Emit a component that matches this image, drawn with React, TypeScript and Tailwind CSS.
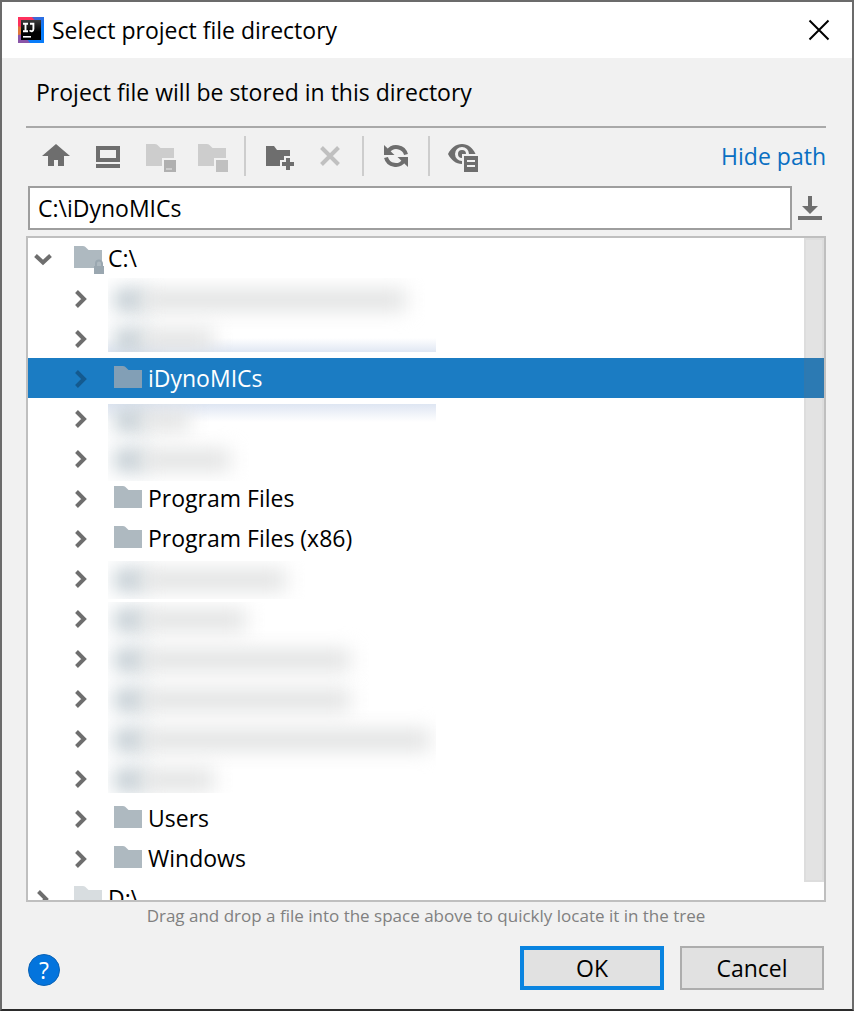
import React, { useState } from "react";

type Tone = "normal" | "selected" | "faded";

type TreeNode = {
  id: string;
  level: 0 | 1;
  label?: string;
  expanded?: boolean;
  locked?: boolean;
  faded?: boolean;
  hidden?: { bar: string; clip: string; tint?: string };
};

const CLIP_MID = "[clip-path:inset(-30px_0_-30px_0)]";

const nodes: TreeNode[] = [
  { id: "c", level: 0, label: "C:\\", expanded: true, locked: true },
  { id: "h1", level: 1, hidden: { bar: "w-64", clip: "[clip-path:inset(0_0_-30px_0)]" } },
  {
    id: "h2",
    level: 1,
    hidden: {
      bar: "w-16",
      clip: "[clip-path:inset(-30px_0_6px_0)]",
      tint: "bg-linear-to-b from-transparent from-50% to-[#d3ddee]",
    },
  },
  { id: "idyno", level: 1, label: "iDynoMICs" },
  {
    id: "h3",
    level: 1,
    hidden: {
      bar: "w-10",
      clip: "[clip-path:inset(6px_0_-30px_0)]",
      tint: "bg-linear-to-t from-transparent from-40% to-[#d3ddee]",
    },
  },
  { id: "h4", level: 1, hidden: { bar: "w-20", clip: "[clip-path:inset(-30px_0_-3px_0)]" } },
  { id: "pf", level: 1, label: "Program Files" },
  { id: "pf86", level: 1, label: "Program Files (x86)" },
  { id: "h5", level: 1, hidden: { bar: "w-34", clip: "[clip-path:inset(3px_0_-1px_0)]" } },
  { id: "h6", level: 1, hidden: { bar: "w-24", clip: "[clip-path:inset(4px_0_-30px_0)]" } },
  { id: "h7", level: 1, hidden: { bar: "w-50", clip: CLIP_MID } },
  { id: "h8", level: 1, hidden: { bar: "w-50", clip: CLIP_MID } },
  { id: "h9", level: 1, hidden: { bar: "w-70", clip: CLIP_MID } },
  { id: "h10", level: 1, hidden: { bar: "w-16", clip: "[clip-path:inset(-30px_0_5px_0)]" } },
  { id: "users", level: 1, label: "Users" },
  { id: "windows", level: 1, label: "Windows" },
  { id: "d", level: 0, label: "D:\\", faded: true },
];

function AppLogo() {
  return (
    <svg className="size-[26px] shrink-0" viewBox="0 0 26 26" aria-hidden="true">
      <defs>
        <linearGradient id="edge" x1="0" y1="0" x2="1" y2="1">
          <stop offset="0.3" stopColor="#4a63cf" />
          <stop offset="0.7" stopColor="#087cfa" />
        </linearGradient>
        <linearGradient id="face" x1="0" y1="0" x2="0" y2="1">
          <stop offset="0" stopColor="#3a3a3a" />
          <stop offset="0.6" stopColor="#000" />
        </linearGradient>
      </defs>
      <rect width="26" height="26" fill="url(#edge)" />
      <path d="M0 0H14L19 6L8 16L0 12Z" fill="#fe315d" />
      <path d="M0 9L5 11V20L0 19Z" fill="#e0783a" />
      <path d="M0 18L5 17L12 26H0Z" fill="#8a55a8" />
      <rect x="3" y="3" width="20" height="20" fill="url(#face)" />
      <path
        d="M5 6.8H10M7.5 6.8V14.2M5 14.2H10M12 6.8H15.4V12C15.4 14.8 13 14.6 11.6 13.4"
        fill="none"
        stroke="#fff"
        strokeWidth="1.9"
      />
      <rect x="5" y="19" width="8" height="1.6" fill="#fff" />
    </svg>
  );
}

function ToolIcon({ children }: { children: React.ReactNode }) {
  return (
    <svg className="size-8" viewBox="0 0 32 32" fill="#6e6e6e" aria-hidden="true">
      {children}
    </svg>
  );
}

function ToolButton({
  label,
  disabled,
  children,
}: {
  label: string;
  disabled?: boolean;
  children: React.ReactNode;
}) {
  return (
    <button type="button" aria-label={label} disabled={disabled} className="shrink-0">
      <ToolIcon>{children}</ToolIcon>
    </button>
  );
}

function Separator() {
  return <span className="mx-4 h-10 w-0.5 shrink-0 bg-[#cdcdcd]" />;
}

function Folder({ tone, locked }: { tone: Tone; locked?: boolean }) {
  const fill = tone === "selected" ? "#829fb6" : tone === "faded" ? "#d8dde0" : "#aeb9c0";
  return (
    <svg className="h-10 w-[30px] shrink-0" viewBox="0 0 30 40" aria-hidden="true">
      <path d="M0 8H9Q11 8 12.500 10L14.500 12H28V30H0Z" fill={fill} />
      {locked && (
        <g>
          <path d="M22 28V25.500A3 3 0 0 1 28 25.500V28" fill="none" stroke="#9aa7b0" strokeWidth="2" />
          <rect x="20" y="28" width="10" height="8" fill="#9aa7b0" />
        </g>
      )}
    </svg>
  );
}

function Chevron({ open, selected }: { open?: boolean; selected?: boolean }) {
  return (
    <svg className="h-10 w-5 shrink-0" viewBox="0 0 20 40" aria-hidden="true">
      <path
        d={open ? "M1.500 17.500L9 24.500L16.500 17.500" : "M4.500 13.500L12 21L4.500 28.500"}
        fill="none"
        stroke={selected ? "#145a8f" : "#6e6e6e"}
        strokeWidth="4"
      />
    </svg>
  );
}

function HiddenEntry({ bar, clip, tint }: { bar: string; clip: string; tint?: string }) {
  return (
    <span className={`-ml-1.5 flex h-10 w-[328px] items-center pt-1 pl-1.5 ${tint ?? ""} ${clip}`}>
      <span className="h-6 w-8 shrink-0 bg-[#c6d0d6] blur-[9px]" />
      <span className={`-ml-1 h-5 shrink-0 bg-[#dfe0e0] blur-[10px] ${bar} box-content pr-2`} />
    </span>
  );
}

export default function App() {
  const [selected, setSelected] = useState("idyno");
  const [path, setPath] = useState("C:\\iDynoMICs");

  return (
    <div className="flex h-screen min-w-[640px] flex-col border-2 border-[#6b6b6b] border-b-[#2b2b2b] bg-[#f1f1f1] font-['Open_Sans','Noto_Sans',sans-serif] text-[23px] leading-8 text-black">
      <header className="flex h-14 shrink-0 items-center gap-2 bg-white pr-5 pl-4">
        <AppLogo />
        <h1 className="flex-1">Select project file directory</h1>
        <button type="button" aria-label="Close">
          <svg className="size-[26px]" viewBox="0 0 26 26" aria-hidden="true">
            <path d="M3.500 3.500L22.500 22.500M22.500 3.500L3.500 22.500" stroke="#000" strokeWidth="2" />
          </svg>
        </button>
      </header>

      <main className="flex min-h-0 flex-1 flex-col pr-[26px] pl-6">
        <p className="flex h-[70px] shrink-0 items-center border-b-2 border-[#a9a9a9] px-2.5">
          Project file will be stored in this directory
        </p>

        <div className="flex h-[58px] shrink-0 items-center pb-0.5 pl-3.5">
          <div className="flex gap-5">
            <ToolButton label="Home">
              <path d="M16 4L30 16H24V26H18V20H14V26H8V16H2Z" />
            </ToolButton>
            <ToolButton label="Desktop">
              <path fillRule="evenodd" d="M4 6H28V22H4ZM8 10V18H24V10Z" />
              <path d="M4 24H28V28H4Z" />
            </ToolButton>
            <ToolButton label="Project directory" disabled>
              <path d="M2 4H11Q13 4 14.500 6L16.500 8H30V18H18V26H2Z" fill="#cdcdcd" />
              <path d="M20 20H32V32H20Z" fill="#b0b0b0" />
              <path d="M22 28H28V30H22Z" fill="#cdcdcd" />
            </ToolButton>
            <ToolButton label="Module directory" disabled>
              <path d="M2 4H11Q13 4 14.500 6L16.500 8H30V18H18V26H2Z" fill="#cdcdcd" />
              <path d="M20 20H32V32H20Z" fill="#c0c0c0" />
            </ToolButton>
          </div>
          <Separator />
          <div className="flex gap-5">
            <ToolButton label="New folder">
              <path d="M4 6H12L15 10H28V16H22V20H18V26H4Z" />
              <path d="M24 18H28V22H32V26H28V30H24V26H20V22H24Z" />
            </ToolButton>
            <ToolButton label="Delete" disabled>
              <path d="M7.500 7.500L24.500 24.500M24.500 7.500L7.500 24.500" stroke="#c0c0c0" strokeWidth="4" />
            </ToolButton>
          </div>
          <Separator />
          <ToolButton label="Refresh">
            <g fill="none" stroke="#6e6e6e" strokeWidth="4">
              <path d="M8 11.500A10 10 0 0 1 26 14.500" />
              <path d="M24 20.500A10 10 0 0 1 6 17.500" />
            </g>
            <path d="M4 5V15H14.500Z" />
            <path d="M28 27V17H17.500Z" />
          </ToolButton>
          <Separator />
          <ToolButton label="Show hidden files">
            <path
              fillRule="evenodd"
              d="M2 14C5 8 10 4 16 4C22 4 27 8 29.500 14H16V24C10 24 5 20 2 14ZM16 7A7 7 0 1 0 16 21V14H23A7 7 0 0 0 16 7Z"
            />
            <path d="M16 10A4 4 0 1 0 16 18V14H20A4 4 0 0 0 16 10Z" />
            <path fillRule="evenodd" d="M18 16H32V32H18ZM21 20V22H29V20ZM21 25V27H29V25Z" />
          </ToolButton>
          <a href="#path" className="ml-auto text-[#0a6fc2]">
            Hide path
          </a>
        </div>

        <div className="flex shrink-0 items-center gap-1.5 pl-0.5">
          <input
            id="path"
            aria-label="Path"
            value={path}
            onChange={(e) => setPath(e.target.value)}
            className="h-11 min-w-0 flex-1 border-2 border-[#9e9e9e] bg-white px-2 outline-none"
          />
          <button type="button" aria-label="Recent paths" className="mr-1">
            <svg className="size-6" viewBox="0 0 24 24" fill="#6e6e6e" aria-hidden="true">
              <path d="M10 0H14V10H20L12 18L4 10H10Z" />
              <path d="M0 20H24V24H0Z" />
            </svg>
          </button>
        </div>

        <div className="relative mt-1.5 flex min-h-0 flex-1 border-2 border-[#bfbfbf] bg-white">
          <ul role="tree" aria-label="Directories" className="flex-1 overflow-y-auto [scrollbar-width:none]">
            {nodes.map((node) => {
              const isSelected = node.id === selected;
              return (
                <li
                  key={node.id}
                  role="treeitem"
                  aria-selected={isSelected}
                  aria-expanded={!!node.expanded}
                  onClick={() => setSelected(node.id)}
                  className={`flex h-10 items-center ${node.level ? "pl-11" : "pl-1.5"} ${
                    isSelected ? "bg-[#1b7cc3] text-white" : ""
                  }`}
                >
                  <Chevron open={node.expanded} selected={isSelected} />
                  <span className={`flex items-center gap-1 ${node.level ? "ml-[22px]" : "ml-5"}`}>
                    {node.hidden ? (
                      <HiddenEntry {...node.hidden} />
                    ) : (
                      <>
                        <Folder
                          tone={isSelected ? "selected" : node.faded ? "faded" : "normal"}
                          locked={node.locked}
                        />
                        <span>{node.label}</span>
                      </>
                    )}
                  </span>
                </li>
              );
            })}
          </ul>
          <div className="absolute top-0 right-0 bottom-[18px] w-5 border-2 border-[#737373]/5 bg-[#737373]/20" />
        </div>

        <p className="shrink-0 text-center text-[17px] leading-7 text-[#808080]">
          Drag and drop a file into the space above to quickly locate it in the tree
        </p>

        <footer className="mt-4 mb-[19px] flex h-11 shrink-0 items-center gap-4 px-0.5">
          <button
            type="button"
            aria-label="Help"
            className="mt-1 mr-auto flex size-8 items-center justify-center rounded-full border border-[#0a62b5] bg-[#0374dd] text-white"
          >
            ?
          </button>
          <button type="button" className="h-11 w-36 border-4 border-[#0a84e0] bg-[#e1e1e1] leading-8">
            OK
          </button>
          <button type="button" className="h-11 w-36 border-2 border-[#adadad] bg-[#e1e1e1] leading-8">
            Cancel
          </button>
        </footer>
      </main>
    </div>
  );
}
